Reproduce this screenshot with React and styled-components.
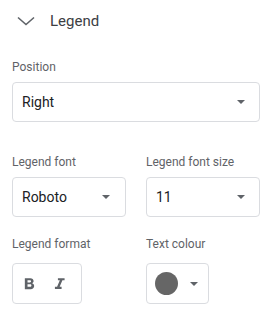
import styled, { createGlobalStyle } from 'styled-components';

const GlobalStyle = createGlobalStyle`
	body {
		margin: 0;
		background: #fff;
		font-family: Roboto, "Liberation Sans", sans-serif;
	}
`;

const Panel = styled.div`
	width: 279px;
	height: 316px;
	background: #fff;
	box-sizing: border-box;
`;

const Header = styled.div`
	height: 42px;
	display: flex;
	align-items: center;
	padding-left: 17px;
	gap: 15px;
	color: #3c4043;
	font-size: 15px;
`;

const Body = styled.div`
	width: 248px;
	padding: 17px 0 0 12px;
	display: flex;
	flex-direction: column;
`;

const Label = styled.div`
	font-size: 12px;
	line-height: 16px;
	color: #5f6368;
	margin-bottom: ${(p) => p.$gap || 7}px;
`;

const Row = styled.div`
	display: grid;
	grid-template-columns: 114px 114px;
	column-gap: 20px;
	margin-top: ${(p) => p.$top}px;
`;

const Select = styled.div`
	height: 40px;
	box-sizing: border-box;
	border: 1px solid #dadce0;
	border-radius: 4px;
	display: flex;
	align-items: center;
	justify-content: space-between;
	padding: 0 ${(p) => p.$right || 14}px 0 9px;
	font-size: 14px;
	color: #202124;
`;

const Caret = styled.span`
	width: 0;
	height: 0;
	border-left: 4px solid transparent;
	border-right: 4px solid transparent;
	border-top: 4px solid #5f6368;
`;

const Toggle = styled.div`
	height: 41px;
	width: ${(p) => p.$width}px;
	box-sizing: border-box;
	border: 1px solid #dadce0;
	border-radius: 4px;
	display: flex;
	align-items: center;
	gap: ${(p) => p.$gap}px;
	padding-left: ${(p) => p.$left}px;
`;

const Swatch = styled.span`
	width: 23px;
	height: 23px;
	border-radius: 50%;
	background: ${(p) => p.$color};
`;

const Chevron = () => (
	<svg width="18" height="10" viewBox="0 0 18 10">
		<polyline points="1,1.5 9,8.5 17,1.5" fill="none" stroke="#5f6368" strokeWidth="1.6" />
	</svg>
);

const BoldIcon = () => (
	<svg width="20" height="20" viewBox="0 0 24 24" fill="#5f6368">
		<path d="M7 5h6.6c2.3 0 3.9 1.4 3.9 3.4 0 1.2-.6 2.2-1.7 2.7 1.4.5 2.4 1.7 2.4 3.4 0 2.2-1.8 3.8-4.2 3.8H7V5zm3.2 2.4v2.7h2.9c.8 0 1.4-.6 1.4-1.35S13.9 7.4 13.1 7.4h-2.9zm0 5v3h3.2c.9 0 1.5-.7 1.5-1.5s-.6-1.5-1.5-1.5h-3.2z" />
	</svg>
);

const ItalicIcon = () => (
	<svg width="20" height="20" viewBox="0 0 24 24" fill="#5f6368">
		<path d="M9.5 5v2.6h2.3l-3.3 7.8H5.9V18h8v-2.6h-2.3l3.3-7.8h2.6V5z" />
	</svg>
);

export default function App() {
	return (
		<Panel>
			<GlobalStyle />
			<Header>
				<Chevron />
				Legend
			</Header>
			<Body>
				<Label>Position</Label>
				<Select>
					Right
					<Caret />
				</Select>

				<Row $top={32}>
					<div>
						<Label $gap={7}>Legend font</Label>
						<Select $right={15}>
							Roboto
							<Caret />
						</Select>
					</div>
					<div>
						<Label $gap={7}>Legend font size</Label>
						<Select>
							11
							<Caret />
						</Select>
					</div>
				</Row>

				<Row $top={19}>
					<div>
						<Label $gap={11}>Legend format</Label>
						<Toggle $width={70} $left={6} $gap={11}>
							<BoldIcon />
							<ItalicIcon />
						</Toggle>
					</div>
					<div>
						<Label $gap={11}>Text colour</Label>
						<Toggle $width={63} $left={8} $gap={12}>
							<Swatch $color="#666666" />
							<Caret />
						</Toggle>
					</div>
				</Row>
			</Body>
		</Panel>
	);
}
